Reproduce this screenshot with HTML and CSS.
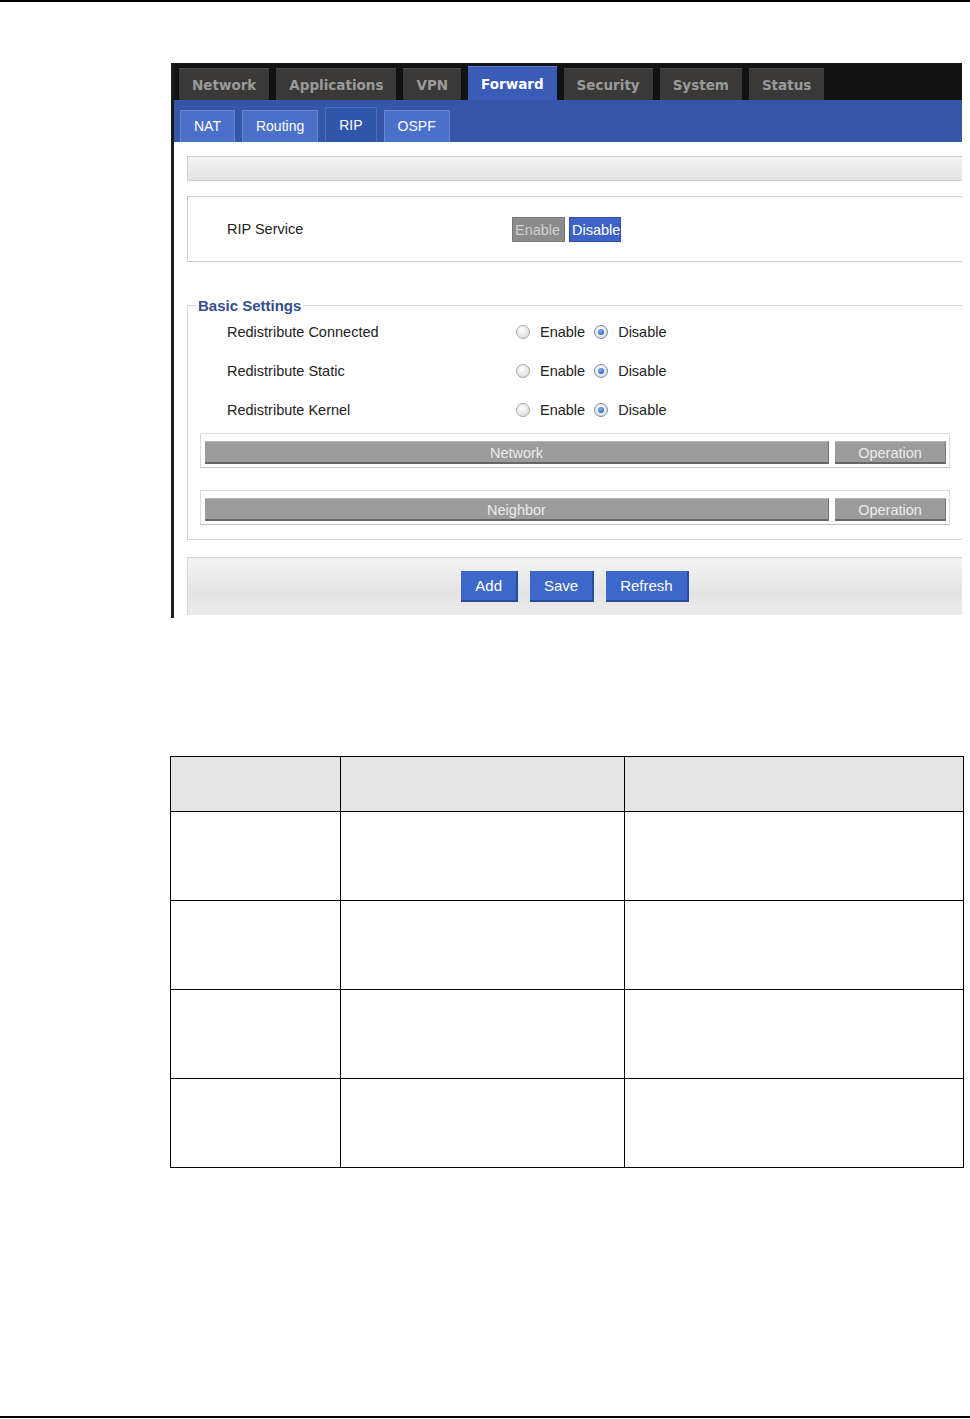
FILE: index.html
```html
<!DOCTYPE html>
<html lang="en">
<head>
    <meta charset="UTF-8">
    <title>RIP Settings</title>
    <link rel="stylesheet" href="styles.css">
</head>
<body>
    <div class="page">
        <div class="rule"></div>

        <div class="shot">
            <div class="topbar">
                <div class="tab">Network</div>
                <div class="tab">Applications</div>
                <div class="tab">VPN</div>
                <div class="tab active">Forward</div>
                <div class="tab">Security</div>
                <div class="tab">System</div>
                <div class="tab">Status</div>
            </div>

            <div class="subbar">
                <div class="subtab">NAT</div>
                <div class="subtab">Routing</div>
                <div class="subtab active">RIP</div>
                <div class="subtab">OSPF</div>
            </div>

            <div class="content">
                <div class="title-bar"></div>

                <div class="service-box">
                    <span class="service-label">RIP Service</span>
                    <span class="toggle off">Enable</span>
                    <span class="toggle on">Disable</span>
                </div>

                <fieldset class="settings">
                    <legend>Basic Settings</legend>

                    <div class="setting-row">
                        <span class="setting-label">Redistribute Connected</span>
                        <span class="radio"></span><span class="radio-text">Enable</span>
                        <span class="radio checked"></span><span class="radio-text">Disable</span>
                    </div>
                    <div class="setting-row">
                        <span class="setting-label">Redistribute Static</span>
                        <span class="radio"></span><span class="radio-text">Enable</span>
                        <span class="radio checked"></span><span class="radio-text">Disable</span>
                    </div>
                    <div class="setting-row">
                        <span class="setting-label">Redistribute Kernel</span>
                        <span class="radio"></span><span class="radio-text">Enable</span>
                        <span class="radio checked"></span><span class="radio-text">Disable</span>
                    </div>

                    <div class="grid-box">
                        <div class="grid-head wide">Network</div>
                        <div class="grid-head">Operation</div>
                    </div>

                    <div class="grid-box">
                        <div class="grid-head wide">Neighbor</div>
                        <div class="grid-head">Operation</div>
                    </div>
                </fieldset>

                <div class="action-bar">
                    <span class="button">Add</span>
                    <span class="button">Save</span>
                    <span class="button">Refresh</span>
                </div>
            </div>
        </div>

        <table class="param-table">
            <tr class="head">
                <td class="c1"></td>
                <td class="c2"></td>
                <td class="c3"></td>
            </tr>
            <tr><td></td><td></td><td></td></tr>
            <tr><td></td><td></td><td></td></tr>
            <tr><td></td><td></td><td></td></tr>
            <tr><td></td><td></td><td></td></tr>
        </table>

        <div class="rule bottom"></div>
    </div>
</body>
</html>
```

FILE: styles.css
```css
* {
    margin: 0;
    padding: 0;
    box-sizing: border-box;
}

body {
    font-family: 'Liberation Sans', Arial, sans-serif;
    background-color: white;
    color: #222;
}

.page {
    min-height: 1419px;
    display: flex;
    flex-direction: column;
}

.rule {
    height: 2px;
    background-color: #000;
}

.rule.bottom {
    margin-top: auto;
    margin-bottom: 1px;
}

/* screenshot of the router page */

.shot {
    margin: 61px 0 0 171px;
    width: 791px;
    height: 555px;
    overflow: hidden;
    border-left: 3px solid #1b1b1b;
    background-color: white;
}

.topbar {
    height: 37px;
    background-color: #121212;
    display: flex;
    align-items: flex-end;
    gap: 7px;
    padding-left: 5px;
}

.tab {
    height: 32px;
    line-height: 32px;
    padding: 0 13px;
    background-color: #3a3937;
    border-top: 1px solid #4c4b49;
    color: #9a9a9a;
    font-family: 'DejaVu Sans', sans-serif;
    font-weight: bold;
    font-size: 13.5px;
}

.tab.active {
    height: 34px;
    line-height: 34px;
    background-color: #3b5cb6;
    border-top-color: #5b7bd0;
    color: #fff;
}

.subbar {
    height: 42px;
    background-color: #3556a8;
    display: flex;
    align-items: flex-end;
    gap: 7px;
    padding-left: 6px;
}

.subtab {
    height: 32px;
    line-height: 30px;
    padding: 0 13px;
    background-color: #4a70c9;
    border: 1px solid #6588d6;
    border-bottom: none;
    color: #fff;
    font-size: 14px;
}

.subtab.active {
    height: 35px;
    line-height: 34px;
    background-color: #3056ab;
    border-color: #4a6fc2;
}

.content {
    padding: 14px 0 0 13px;
}

.title-bar {
    height: 25px;
    border: 1px solid #d0d0d0;
    border-right: none;
    background: linear-gradient(#f3f3f3, #e3e3e3);
}

.service-box {
    margin-top: 15px;
    height: 66px;
    border: 1px solid #cfcfcf;
    border-right: none;
    display: flex;
    align-items: center;
    padding-left: 39px;
    font-size: 14.5px;
}

.service-label {
    width: 285px;
}

.toggle {
    height: 25px;
    line-height: 25px;
    padding: 0 2px;
    margin-right: 4px;
    font-size: 14.5px;
}

.toggle.off {
    width: 53px;
    background-color: #8b8b8b;
    border: 1px solid #777;
    color: #d0d0d0;
}

.toggle.on {
    width: 52px;
    background-color: #3e63c6;
    border: 1px solid #2f50a8;
    color: #fff;
}

.settings {
    margin-top: 35px;
    border: none;
    border-top: 1px solid #d5d5d5;
    border-left: 1px solid #d5d5d5;
    border-bottom: 1px solid #d8d8d8;
    padding: 6px 12px 14px 0;
}

.settings legend {
    margin-left: 8px;
    padding: 0 2px;
    color: #334f8e;
    font-weight: bold;
    font-size: 15px;
}

.setting-row {
    height: 39px;
    display: flex;
    align-items: center;
    padding-left: 39px;
    font-size: 14.5px;
}

.setting-row:first-of-type {
    margin-top: -8px;
}

.setting-label {
    width: 289px;
}

.radio {
    width: 14px;
    height: 14px;
    border-radius: 50%;
    border: 1px solid #a8a8a8;
    background: radial-gradient(circle at 40% 35%, #fff, #d4d4d4);
    margin-right: 10px;
    position: relative;
}

.radio.checked {
    border-color: #7a8aa8;
}

.radio.checked::after {
    content: '';
    position: absolute;
    left: 3px;
    top: 3px;
    width: 6px;
    height: 6px;
    border-radius: 50%;
    background: radial-gradient(circle at 40% 35%, #7fb0f0, #1c4fae);
}

.radio-text {
    margin-right: 9px;
}

.grid-box {
    margin-left: 12px;
    margin-top: 4px;
    height: 35px;
    border: 1px solid #dadada;
    border-bottom-color: #c4c4c4;
    display: flex;
    gap: 6px;
    padding: 7px 3px 3px 4px;
}

.grid-box + .grid-box {
    margin-top: 22px;
}

.grid-head {
    width: 111px;
    height: 23px;
    line-height: 22px;
    background-color: #9b9b9b;
    border-top: 1px solid #b8b8b8;
    border-bottom: 2px solid #666;
    border-right: 1px solid #777;
    color: #ececec;
    text-align: center;
    font-size: 14.5px;
}

.grid-head.wide {
    flex: 1;
}

.action-bar {
    margin-top: 17px;
    height: 58px;
    border-top: 1px solid #d0d0d0;
    border-left: 1px solid #d8d8d8;
    background: linear-gradient(#f4f4f4, #e4e4e4 60%, #ececec);
    display: flex;
    justify-content: center;
    align-items: center;
    gap: 12px;
}

.button {
    height: 31px;
    line-height: 30px;
    padding: 0 14px;
    background-color: #3d67c8;
    border-right: 2px solid #2b4c96;
    border-bottom: 2px solid #2b4c96;
    color: #fff;
    font-size: 15px;
}

/* parameter table under the screenshot */

.param-table {
    margin: 138px 0 0 170px;
    width: 794px;
    border-collapse: collapse;
}

.param-table td {
    border: 1.5px solid #000;
    height: 89px;
}

.param-table .head td {
    height: 55px;
    background-color: #e4e4e4;
}

.param-table .c1 {
    width: 170px;
}

.param-table .c2 {
    width: 284px;
}
```
